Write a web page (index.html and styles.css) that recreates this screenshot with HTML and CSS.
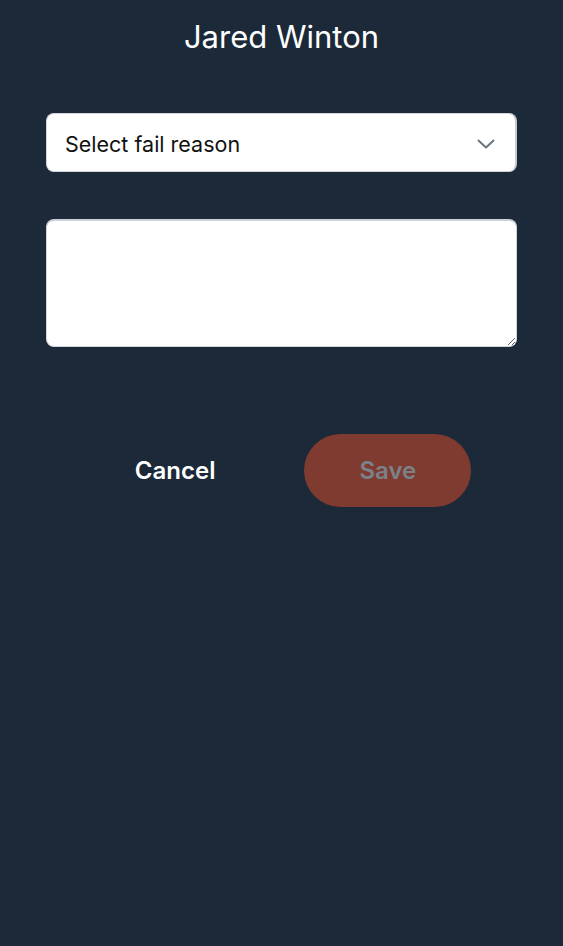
FILE: index.html
```html
<!DOCTYPE html>
<html lang="en">

<head>
    <meta charset="UTF-8">
    <meta name="viewport" content="width=device-width, initial-scale=1.0">
    <title>Fail reason</title>
    <link rel="stylesheet" href="styles.css">
</head>

<body>
    <div class="page">
        <!-- 标题 -->
        <h1 class="title">Jared Winton</h1>

        <div class="field">
            <div class="select">
                <span>Select fail reason</span>
                <svg class="chevron" width="18" height="10" viewBox="0 0 18 10">
                    <path d="M1.5 1.5l7.5 7 7.5-7" fill="none" stroke="#6b7280" stroke-width="2" stroke-linecap="round" stroke-linejoin="round"/>
                </svg>
            </div>
        </div>

        <div class="field">
            <textarea class="note"></textarea>
        </div>

        <div class="actions">
            <button class="btn cancel">Cancel</button>
            <button class="btn save">Save</button>
        </div>
    </div>
</body>

</html>
```

FILE: styles.css
```css
* {
    margin: 0;
    padding: 0;
    box-sizing: border-box;
}

body {
    background-color: #1c2939;
    font-family: Inter, "Noto Sans", sans-serif;
    height: 946px;
}

.page {
    padding: 17px 46px 0;
}

.title {
    text-align: center;
    color: #fff;
    font-size: 31px;
    font-weight: 400;
    line-height: 40px;
    margin-bottom: 56px;
}

.field {
    margin-bottom: 47px;
}

.select {
    height: 59px;
    background-color: #fff;
    border: 1px solid #d1d5db;
    border-right: 2px solid #c4cad3;
    border-radius: 8px;
    padding: 2px 20px 0 18px;
    display: flex;
    align-items: center;
    justify-content: space-between;
    font-size: 21.5px;
    color: #111;
}

.note {
    display: block;
    width: 100%;
    height: 128px;
    background-color: #fff;
    border: 1px solid #d1d5db;
    border-top: 2px solid #cbd2dc;
    border-radius: 8px;
    resize: vertical;
    outline: none;
}

.actions {
    margin-top: 87px;
    display: flex;
    justify-content: space-evenly;
}

.btn {
    width: 167px;
    height: 73px;
    border: none;
    border-radius: 37px;
    font-family: Inter, "Noto Sans", sans-serif;
    font-size: 24px;
    font-weight: 600;
    background: none;
}

.cancel {
    color: #fff;
}

.save {
    background-color: #7f3b2f;
    color: #7b8189;
}
```
